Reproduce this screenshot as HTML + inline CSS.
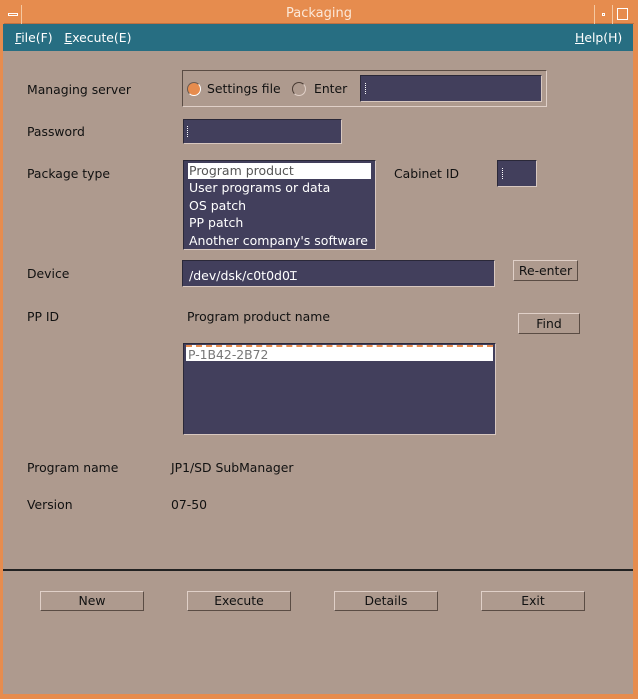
<html><head><style>
*{margin:0;padding:0;box-sizing:border-box}
body{width:638px;height:699px;background:#e68c4e;position:relative;overflow:hidden;font-family:"DejaVu Sans","Liberation Sans",sans-serif;font-size:12.4px;color:#111}
.a{position:absolute}
.t{position:absolute;white-space:nowrap}
.fld{position:absolute;background:#423f5c;border-top:1px solid #2a2838;border-left:1px solid #2a2838;border-bottom:1px solid #d8c8c0;border-right:1px solid #d8c8c0;color:#fff}
.btn{position:absolute;background:#ae9a8e;border-top:1px solid #e0d0c8;border-left:1px solid #e0d0c8;border-bottom:1px solid #5a4c44;border-right:1px solid #5a4c44;text-align:center;font-size:12.4px;line-height:17px}
.cur{position:absolute;width:2px;height:11px;border-left:1px dotted #fff}
</style></head><body>
<div class="a" style="left:4px;top:5px;width:630px;height:19px;background:#e68c4e;border-bottom:1px solid #c07040"></div>
<div class="a" style="left:4px;top:5px;width:18px;height:19px;border-right:1px solid #f5c8a0"></div>
<div class="a" style="left:8px;top:13px;width:10px;height:3px;border:1px solid #fff"></div>
<div class="t" style="left:0;width:638px;text-align:center;top:6px;color:#fce8d8;font-size:13px">Packaging</div>
<div class="a" style="left:594px;top:5px;width:1px;height:19px;background:#f5c8a0"></div>
<div class="a" style="left:612px;top:5px;width:1px;height:19px;background:#f5c8a0"></div>
<div class="a" style="left:602px;top:13px;width:3px;height:3px;border:1px solid #fff"></div>
<div class="a" style="left:617px;top:8px;width:11px;height:12px;border:1px solid #fff"></div>
<div class="a" style="left:3px;top:24px;width:630px;height:27px;background:#276e82"></div>
<div class="t" style="left:15px;top:30px;color:#fff"><u>F</u>ile(F)&nbsp;&nbsp;&nbsp;<u>E</u>xecute(E)</div>
<div class="t" style="left:575px;top:30px;color:#fff"><u>H</u>elp(H)</div>
<div class="a" style="left:3px;top:51px;width:630px;height:643px;background:#ae9a8e"></div>
<div class="a" style="left:3px;top:569px;width:630px;height:2px;background:#222"></div>

<div class="t" style="left:27px;top:82px">Managing server</div>
<div class="a" style="left:182px;top:70px;width:365px;height:37px;border:1px solid #5a4c44;border-right-color:#e0d0c8;border-bottom-color:#e0d0c8"></div>
<div class="a" style="left:187px;top:82px;width:14px;height:14px;border-radius:50%;background:#e68c4e;border:1px solid #fff;border-top-color:#6a5a50;border-left-color:#6a5a50"></div>
<div class="t" style="left:207px;top:81px">Settings file</div>
<div class="a" style="left:292px;top:82px;width:14px;height:14px;border-radius:50%;border:1px solid #e0d0c8;border-top-color:#4a3c34;border-left-color:#4a3c34"></div>
<div class="t" style="left:314px;top:81px">Enter</div>
<div class="fld" style="left:360px;top:75px;width:182px;height:27px"><div class="cur" style="left:4px;top:7px"></div></div>

<div class="t" style="left:27px;top:124px">Password</div>
<div class="fld" style="left:183px;top:119px;width:159px;height:25px"><div class="cur" style="left:3px;top:6px"></div></div>

<div class="t" style="left:27px;top:166px">Package type</div>
<div class="fld" style="left:183px;top:160px;width:193px;height:90px;font-size:12.5px;line-height:17.7px">
<div style="background:#fff;color:#555;margin:2px 4px 0 4px;padding-left:1px;height:16px;line-height:16px">Program product</div>
<div style="padding-left:5px">User programs or data<br>OS patch<br>PP patch<br>Another company's software</div></div>
<div class="t" style="left:394px;top:166px">Cabinet ID</div>
<div class="fld" style="left:497px;top:160px;width:40px;height:27px"><div class="cur" style="left:4px;top:7px"></div></div>

<div class="t" style="left:27px;top:266px">Device</div>
<div class="fld" style="left:182px;top:260px;width:313px;height:27px;padding:6px 0 0 6px;font-size:12.5px">/dev/dsk/c0t0d0<span style="color:#fff">Ɪ</span></div>
<div class="btn" style="left:513px;top:260px;width:65px;height:21px;line-height:19px">Re-enter</div>

<div class="t" style="left:27px;top:309px">PP ID</div>
<div class="t" style="left:187px;top:309px">Program product name</div>
<div class="btn" style="left:518px;top:313px;width:62px;height:21px;line-height:19px">Find</div>
<div class="fld" style="left:183px;top:343px;width:313px;height:92px">
<div style="background:#fff;color:#777;margin:1px 2px;height:16px;line-height:16px;padding-left:2px;border-top:2px dashed #e68c4e">P-1B42-2B72</div></div>

<div class="t" style="left:27px;top:460px">Program name</div>
<div class="t" style="left:171px;top:460px">JP1/SD SubManager</div>
<div class="t" style="left:27px;top:497px">Version</div>
<div class="t" style="left:171px;top:497px">07-50</div>

<div class="btn" style="left:40px;top:591px;width:104px;height:20px">New</div>
<div class="btn" style="left:187px;top:591px;width:104px;height:20px">Execute</div>
<div class="btn" style="left:334px;top:591px;width:104px;height:20px">Details</div>
<div class="btn" style="left:481px;top:591px;width:104px;height:20px">Exit</div>
</body></html>
